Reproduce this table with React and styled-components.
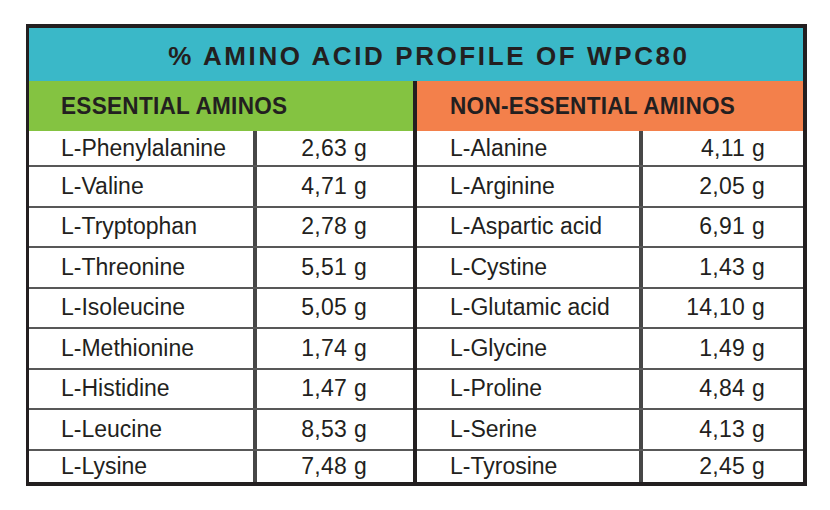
import React from 'react';
import styled, { createGlobalStyle } from 'styled-components';

const GlobalStyle = createGlobalStyle`
  body {
    margin: 0;
    background: #ffffff;
    font-family: "Liberation Sans", Arial, sans-serif;
    color: #231f20;
  }
`;

const Page = styled.div`
  width: 830px;
  height: 510px;
  padding: 24px 0 0 26px;
  box-sizing: border-box;
`;

const Table = styled.div`
  width: 781px;
  height: 462px;
  box-sizing: border-box;
  border-style: solid;
  border-color: #231f20;
  border-width: 4px 4px 4px 3px;
  display: flex;
  flex-direction: column;
`;

const Title = styled.div`
  height: 53px;
  box-sizing: border-box;
  background: #3ab8c8;
  display: flex;
  align-items: center;
  justify-content: center;
  padding: 3px 0 0 26px;
  font-family: "Liberation Sans", Arial, sans-serif;
  font-weight: 700;
  font-size: 26px;
  letter-spacing: 2.6px;
  color: #231f20;
`;

const Halves = styled.div`
  flex: 1;
  display: flex;
`;

const Half = styled.div`
  width: ${p => p.$width}px;
  display: flex;
  flex-direction: column;
  border-left: ${p => (p.$divided ? '4px solid #231f20' : 'none')};
`;

const SubHead = styled.div`
  height: 50px;
  background: ${p => p.$color};
  display: flex;
  align-items: center;
  padding-left: ${p => p.$pad}px;
  font-family: "Liberation Sans", Arial, sans-serif;
  font-weight: 700;
  font-size: 24px;
  letter-spacing: 0.3px;
`;

// the print face is a condensed gothic; squeeze the label to its width
const SubLabel = styled.span`
  display: inline-block;
  transform: scaleX(0.94);
  transform-origin: left center;
  white-space: nowrap;
`;

const Rows = styled.div`
  flex: 1;
  display: grid;
  grid-template-rows: 34px repeat(7, 40.5px) 1fr;
`;

const Row = styled.div`
  display: grid;
  grid-template-columns: ${p => p.$nameWidth}px 1fr;
  border-top: ${p => (p.$first ? 'none' : '2px solid #585858')};
`;

const NameCell = styled.div`
  display: flex;
  align-items: center;
  padding-left: ${p => p.$pad}px;
  font-size: 23px;
  border-right: 4px solid #474747;
`;

const ValueCell = styled.div`
  display: flex;
  align-items: center;
  justify-content: flex-end;
  padding-right: ${p => p.$pad}px;
  font-size: 23px;
  letter-spacing: 0.3px;
`;

const essential = [
  ['L-Phenylalanine', '2,63 g'],
  ['L-Valine', '4,71 g'],
  ['L-Tryptophan', '2,78 g'],
  ['L-Threonine', '5,51 g'],
  ['L-Isoleucine', '5,05 g'],
  ['L-Methionine', '1,74 g'],
  ['L-Histidine', '1,47 g'],
  ['L-Leucine', '8,53 g'],
  ['L-Lysine', '7,48 g'],
];

const nonEssential = [
  ['L-Alanine', '4,11 g'],
  ['L-Arginine', '2,05 g'],
  ['L-Aspartic acid', '6,91 g'],
  ['L-Cystine', '1,43 g'],
  ['L-Glutamic acid', '14,10 g'],
  ['L-Glycine', '1,49 g'],
  ['L-Proline', '4,84 g'],
  ['L-Serine', '4,13 g'],
  ['L-Tyrosine', '2,45 g'],
];

const Column = ({ title, color, items, width, divided, namePad, nameWidth, valuePad }) => (
  <Half $width={width} $divided={divided}>
    <SubHead $color={color} $pad={namePad}>
      <SubLabel>{title}</SubLabel>
    </SubHead>
    <Rows>
      {items.map(([name, value], i) => (
        <Row key={name} $first={i === 0} $nameWidth={nameWidth}>
          <NameCell $pad={namePad}>{name}</NameCell>
          <ValueCell $pad={valuePad}>{value}</ValueCell>
        </Row>
      ))}
    </Rows>
  </Half>
);

export default function App() {
  return (
    <>
      <GlobalStyle />
      <Page>
        <Table>
          <Title>% AMINO ACID PROFILE OF WPC80</Title>
          <Halves>
            <Column
              title="ESSENTIAL AMINOS"
              color="#84c341"
              items={essential}
              width={386}
              namePad={32}
              nameWidth={228}
              valuePad={46}
            />
            <Column
              title="NON-ESSENTIAL AMINOS"
              color="#f3804b"
              items={nonEssential}
              width={388}
              divided
              namePad={33}
              nameWidth={226}
              valuePad={38}
            />
          </Halves>
        </Table>
      </Page>
    </>
  );
}
